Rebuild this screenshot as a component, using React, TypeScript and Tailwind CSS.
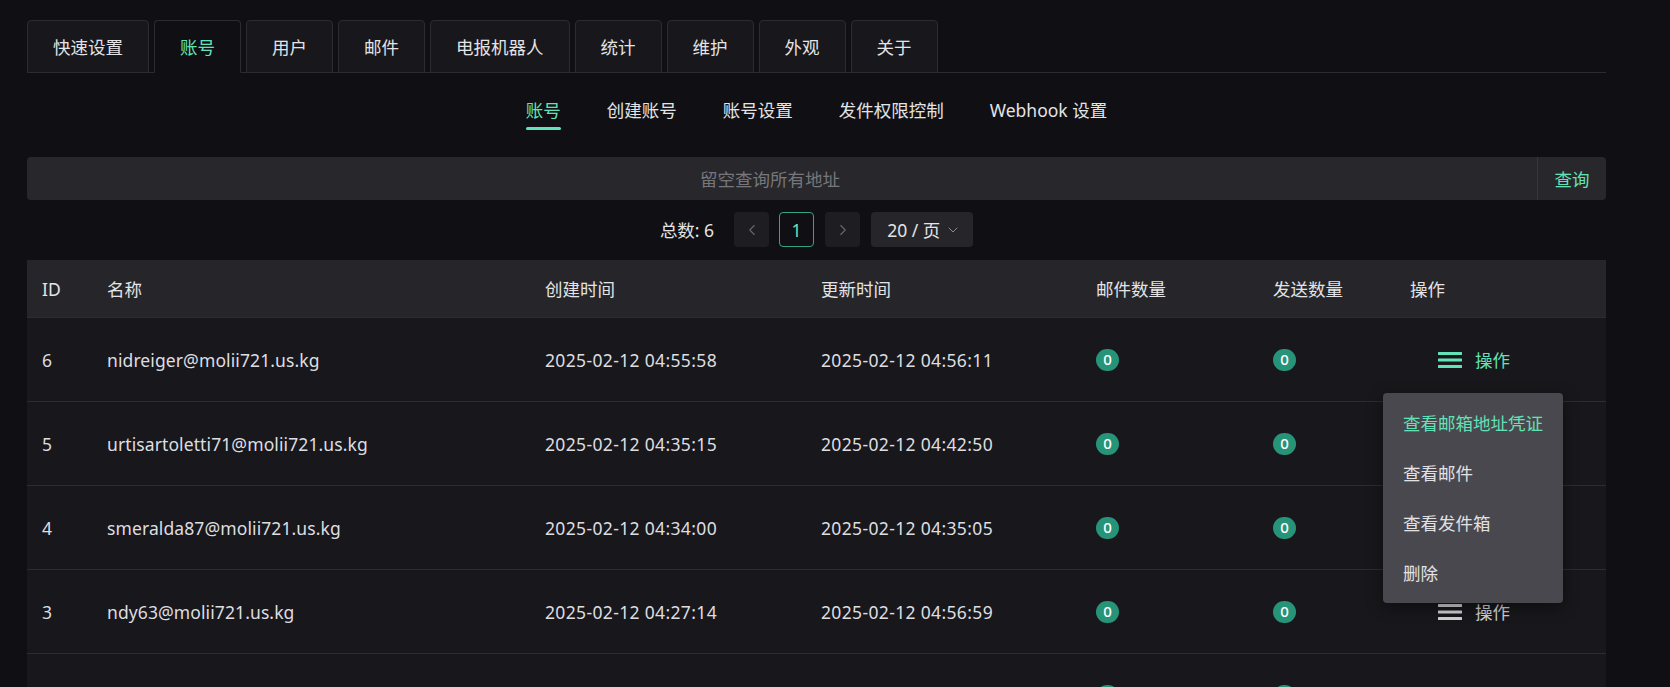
import { ChevronDown, ChevronLeft, ChevronRight } from "lucide-react"

const tabs = ["快速设置", "账号", "用户", "邮件", "电报机器人", "统计", "维护", "外观", "关于"]
const subTabs = ["账号", "创建账号", "账号设置", "发件权限控制", "Webhook 设置"]

const rows = [
  { id: 6, name: "nidreiger@molii721.us.kg", created: "2025-02-12 04:55:58", updated: "2025-02-12 04:56:11" },
  { id: 5, name: "urtisartoletti71@molii721.us.kg", created: "2025-02-12 04:35:15", updated: "2025-02-12 04:42:50" },
  { id: 4, name: "smeralda87@molii721.us.kg", created: "2025-02-12 04:34:00", updated: "2025-02-12 04:35:05" },
  { id: 3, name: "ndy63@molii721.us.kg", created: "2025-02-12 04:27:14", updated: "2025-02-12 04:56:59" },
  { id: 2, name: "ravello19@molii721.us.kg", created: "2025-02-12 04:20:41", updated: "2025-02-12 04:21:03" },
]

const menuItems = ["查看邮箱地址凭证", "查看邮件", "查看发件箱", "删除"]

const cols = "grid grid-cols-[65px_438px_276px_275px_177px_137px_211px]"

function MenuIcon({ color }: { color: string }) {
  return (
    <svg width="24" height="16" viewBox="0 0 24 16" fill={color}>
      <rect x="0" y="0" width="24" height="3" rx="0.5" />
      <rect x="0" y="6.5" width="24" height="3" rx="0.5" />
      <rect x="0" y="13" width="24" height="3" rx="0.5" />
    </svg>
  )
}

function Badge() {
  return (
    <span className="inline-flex h-[22px] min-w-[23px] items-center justify-center rounded-full bg-[#279479] px-[6px] text-[15px] font-medium leading-none text-white">
      0
    </span>
  )
}

export default function App() {
  return (
    <div className="relative h-[687px] w-[1670px] overflow-hidden bg-[#101014] font-['Noto_Sans','Noto_Sans_CJK_SC',sans-serif] text-[17.5px] leading-[1.6] text-[#e4e4e6]">
      <div className="ml-[27px] w-[1579px] pt-[20px]">
        {/* top tabs */}
        <div className="flex gap-[5px] border-b border-[#2c2c30]">
          {tabs.map((t) => (
            <div
              key={t}
              className={
                t === "账号"
                  ? "-mb-px flex h-[53px] items-center rounded-t-[4px] border border-[#2c2c30] border-b-[#101014] bg-[#101014] px-[25px] text-[#63e2b7]"
                  : "-mb-px flex h-[53px] items-center rounded-t-[4px] border border-[#2c2c30] bg-[#18181c] px-[25px]"
              }
            >
              {t}
            </div>
          ))}
        </div>

        {/* sub tabs */}
        <div className="mt-[23px] flex justify-center gap-[46px]">
          {subTabs.map((t, i) => (
            <div key={t} className="flex flex-col items-center">
              <span className={i === 0 ? "leading-[28px] text-[#63e2b7]" : "leading-[28px]"}>{t}</span>
              <span className={i === 0 ? "mt-[3px] h-[3px] w-full rounded-full bg-[#63e2b7]" : "mt-[3px] h-[3px] w-full"} />
            </div>
          ))}
        </div>

        {/* search */}
        <div className="mt-[27px] flex h-[43px] rounded-[4px] bg-[#28282c]">
          <div className="flex flex-1 items-center justify-center pr-[24px] text-[#77777b]">留空查询所有地址</div>
          <div className="flex w-[69px] items-center justify-center border-l border-[#37373b] text-[#63e2b7]">查询</div>
        </div>

        {/* pagination */}
        <div className="mt-[12px] flex h-[35px] items-center justify-center">
          <span>总数: 6</span>
          <div className="ml-[20px] flex h-[35px] w-[35px] items-center justify-center rounded-[4px] bg-[#1e1e22] text-[#66666b]">
            <ChevronLeft size={18} strokeWidth={1.5} />
          </div>
          <div className="ml-[10px] flex h-[35px] w-[35px] items-center justify-center rounded-[4px] border border-[#35a283] text-[#63e2b7]">
            1
          </div>
          <div className="ml-[11px] flex h-[35px] w-[35px] items-center justify-center rounded-[4px] bg-[#1e1e22] text-[#66666b]">
            <ChevronRight size={18} strokeWidth={1.5} />
          </div>
          <div className="ml-[11px] flex h-[35px] w-[102px] items-center gap-[5px] rounded-[4px] bg-[#26262a] pl-[16px]">
            <span>20 / 页</span>
            <ChevronDown size={16} strokeWidth={1.5} className="text-[#8a8a8e]" />
          </div>
        </div>

        {/* table */}
        <div className="mt-[13px]">
          <div className={`${cols} h-[58px] items-center border-b border-[#2d2d30] bg-[#26262a]`}>
            {["ID", "名称", "创建时间", "更新时间", "邮件数量", "发送数量", "操作"].map((h) => (
              <div key={h} className="pl-[15px]">
                {h}
              </div>
            ))}
          </div>
          {rows.map((r, i) => (
            <div key={r.id} className={`${cols} h-[84px] items-center border-b border-[#2d2d30] bg-[#18181c] text-[#dedee0]`}>
              <div className="pl-[15px]">{r.id}</div>
              <div className="pl-[15px] tracking-[0.1px]">{r.name}</div>
              <div className="pl-[15px] tracking-[0.35px]">{r.created}</div>
              <div className="pl-[15px] tracking-[0.35px]">{r.updated}</div>
              <div className="flex pl-[15px]">
                <Badge />
              </div>
              <div className="flex pl-[15px]">
                <Badge />
              </div>
              <div className="pl-[15px]">
                <div className={i === 0 ? "ml-[28px] flex items-center gap-[13px] text-[#63e2b7]" : "ml-[28px] flex items-center gap-[13px] text-[#d2d2d5]"}>
                  <MenuIcon color={i === 0 ? "#63e2b7" : "#d2d2d5"} />
                  <span>操作</span>
                </div>
              </div>
            </div>
          ))}
        </div>
      </div>

      {/* dropdown menu */}
      <div className="absolute left-[1383px] top-[393px] w-[180px] rounded-[4px] bg-[#48484e] py-[5px] shadow-[0_4px_16px_rgba(0,0,0,0.45)]">
        {menuItems.map((m, i) => (
          <div key={m} className={i === 0 ? "flex h-[50px] items-center px-[20px] text-[#63e2b7]" : "flex h-[50px] items-center px-[20px] text-[#e2e2e4]"}>
            {m}
          </div>
        ))}
      </div>
    </div>
  )
}
